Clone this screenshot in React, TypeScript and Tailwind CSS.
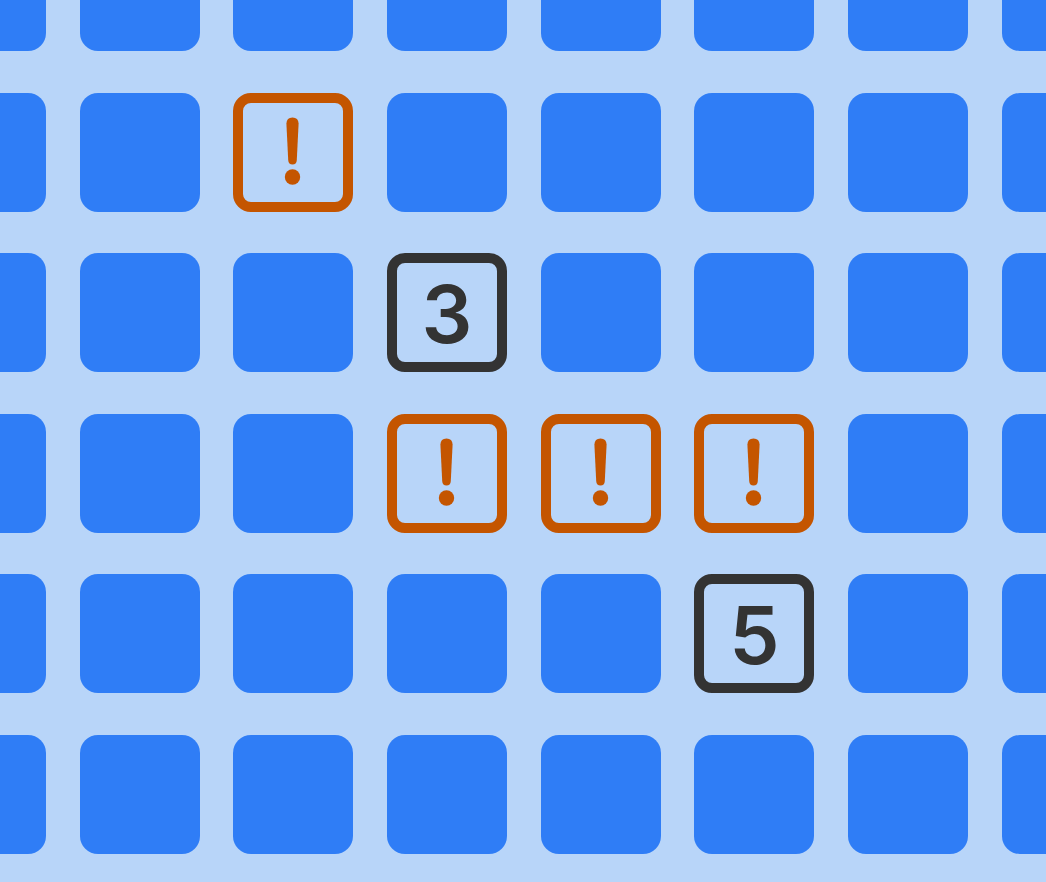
type Mark = "warn" | number | null;

const rows: Mark[][] = [
  [null, null, null, null, null, null, null, null],
  [null, null, "warn", null, null, null, null, null],
  [null, null, null, 3, null, null, null, null],
  [null, null, null, "warn", "warn", "warn", null, null],
  [null, null, null, null, null, 5, null, null],
  [null, null, null, null, null, null, null, null],
];

const Bang = () => (
  <svg width="120" height="119" viewBox="0 0 120 119" className="absolute inset-0">
    <path d="M53.4 30.5 Q53.6 24.5 59.5 24.5 Q65.4 24.5 65.6 30.5 L63.8 67 Q63.5 71.5 59.5 71.5 Q55.5 71.5 55.2 67 Z" fill="#c45500" />
    <circle cx="59.5" cy="84" r="7.7" fill="#c45500" />
  </svg>
);

const Tile = ({ mark }: { mark: Mark }) => {
  if (mark === null) {
    return <div className="w-[120px] h-[119px] rounded-[18px] bg-[#2f7df6]" />;
  }
  if (mark === "warn") {
    return (
      <div className="relative w-[120px] h-[119px] rounded-[18px] border-[10px] border-[#c45500]">
        <div className="absolute -inset-[10px]">
          <Bang />
        </div>
      </div>
    );
  }
  return (
    <div className="w-[120px] h-[119px] rounded-[18px] border-[10px] border-[#333333] flex items-center justify-center">
      <span className="font-['Inter',sans-serif] font-semibold text-[80px] leading-none text-[#333333] pt-[2px]">
        {mark}
      </span>
    </div>
  );
};

export default function App() {
  return (
    <div className="w-[1046px] h-[882px] overflow-hidden bg-[#b8d5f9]">
      <div className="ml-[-74px] mt-[-68px] grid grid-cols-[repeat(8,120px)] gap-x-[33.67px] gap-y-[41.5px]">
        {rows.map((row, r) =>
          row.map((m, c) => <Tile key={`${r}-${c}`} mark={m} />)
        )}
      </div>
    </div>
  );
}
